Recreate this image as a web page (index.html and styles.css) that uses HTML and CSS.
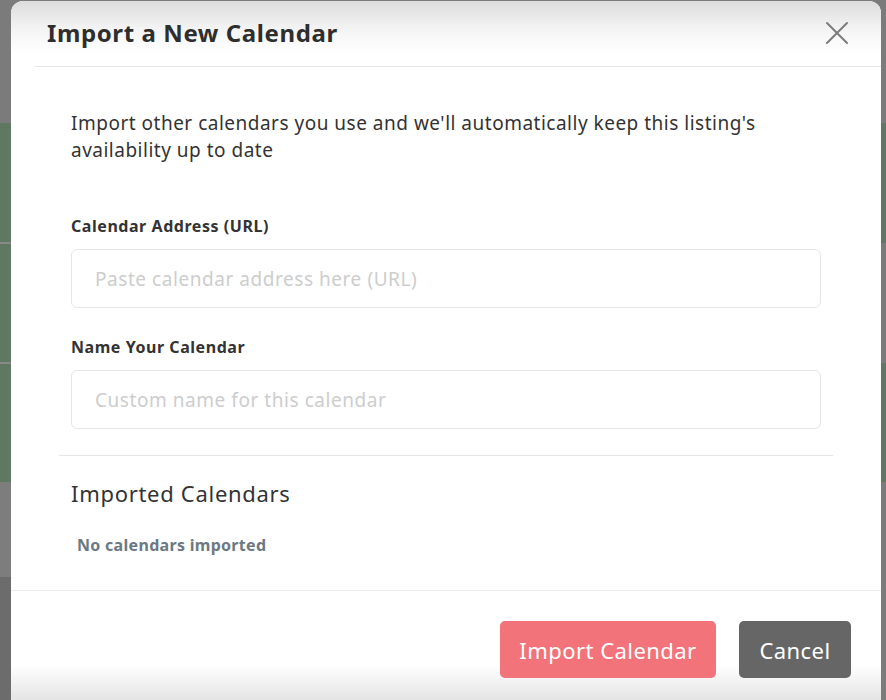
FILE: index.html
```html
<!DOCTYPE html>
<html lang="en">
<head>
<meta charset="utf-8">
<title>Import a New Calendar</title>
<link rel="stylesheet" href="styles.css">
</head>
<body>
<div class="modal">
  <div class="modal-header">
    <h2 class="modal-title">Import a New Calendar</h2>
    <button class="close-btn" aria-label="Close">
      <svg width="24" height="24" viewBox="0 0 24 24"><path d="M2 2 L22 22 M22 2 L2 22" stroke="#7c7c7c" stroke-width="2" fill="none" stroke-linecap="round"/></svg>
    </button>
  </div>
  <div class="modal-body">
    <p class="intro">Import other calendars you use and we'll automatically keep this listing's availability up to date</p>
    <label class="field-label">Calendar Address (URL)</label>
    <input class="field-input" type="text" placeholder="Paste calendar address here (URL)">
    <label class="field-label second">Name Your Calendar</label>
    <input class="field-input" type="text" placeholder="Custom name for this calendar">
    <hr class="divider">
    <h3 class="section-title">Imported Calendars</h3>
    <p class="empty">No calendars imported</p>
  </div>
  <div class="modal-footer">
    <button class="btn btn-primary">Import Calendar</button>
    <button class="btn btn-secondary">Cancel</button>
  </div>
</div>
</body>
</html>
```

FILE: styles.css
```css
html, body {
  margin: 0;
  padding: 0;
  height: 700px;
  overflow: hidden;
}
body {
  font-family: "Noto Sans", "Open Sans", sans-serif;
  color: #333;
  background:
    linear-gradient(to bottom,
      #7b7b7b 0, #7b7b7b 123px,
      #5f7861 123px, #5f7861 242px,
      #8a8a8a 242px, #8a8a8a 244px,
      #5f7861 244px, #5f7861 362px,
      #8a8a8a 362px, #8a8a8a 364px,
      #5f7861 364px, #5f7861 482px,
      #7d7d7d 482px, #7d7d7d 577px,
      #6c6c6c 577px, #6c6c6c 700px) left top / 11px 700px no-repeat,
    linear-gradient(to bottom,
      #7b7b7b 0, #7b7b7b 123px,
      #5f7861 123px, #5f7861 243px,
      #7b7b7b 243px, #7b7b7b 363px,
      #5f7861 363px, #5f7861 482px,
      #7b7b7b 482px, #7b7b7b 700px) right top / 5px 700px no-repeat,
    #7b7b7b;
}
.modal {
  margin: 1px 0 0 11px;
  width: 870px;
  height: 760px;
  background: #fff;
  border-radius: 12px 12px 0 0;
  display: flex;
  flex-direction: column;
  overflow: hidden;
}
.modal-header {
  height: 66px;
  box-sizing: border-box;
  background: linear-gradient(to bottom, #dcdcdc 0, #f4f4f4 28px, #fff 52px);
  display: flex;
  align-items: center;
  justify-content: space-between;
  padding: 0 32px 4px 36px;
  position: relative;
}
.modal-header::after {
  content: "";
  position: absolute;
  left: 24px;
  right: 0;
  bottom: 0;
  height: 1px;
  background: #e6e6e6;
}
.modal-title {
  margin: 0;
  font-size: 24px;
  font-weight: 700;
  color: #2e2e2e;
  letter-spacing: 0.6px;
}
.close-btn {
  border: 0;
  background: none;
  padding: 0;
  width: 24px;
  height: 24px;
  cursor: pointer;
  margin-top: 2px;
}
.modal-body {
  padding: 43px 48px 34px;
  border-bottom: 1px solid #ebebeb;
  display: flex;
  flex-direction: column;
}
.intro {
  margin: 0 12px;
  font-size: 19px;
  line-height: 27px;
  color: #333;
  letter-spacing: 0.5px;
}
.field-label {
  margin: 51px 12px 0;
  font-size: 16px;
  line-height: 22px;
  font-weight: 700;
  color: #333;
  letter-spacing: 0.55px;
}
.field-label.second {
  margin-top: 28px;
}
.field-input {
  margin: 12px 12px 0;
  height: 59px;
  box-sizing: border-box;
  border: 1px solid #e6e6e6;
  border-radius: 6px;
  padding: 0 23px;
  font-family: inherit;
  font-size: 19px;
  letter-spacing: 0.55px;
  color: #333;
  outline: none;
}
.field-input::placeholder {
  color: #cdcdcd;
}
.divider {
  margin: 26px 0 0;
  border: 0;
  border-top: 1px solid #e6e6e6;
  height: 0;
}
.section-title {
  margin: 22px 12px 0;
  font-size: 22px;
  line-height: 30px;
  font-weight: 400;
  color: #333;
  letter-spacing: 0.7px;
}
.empty {
  margin: 26px 18px 0;
  font-size: 16px;
  line-height: 22px;
  font-weight: 700;
  color: #6c7882;
  letter-spacing: 0.3px;
}
.modal-footer {
  flex: 1;
  padding: 30px 30px 0;
  display: flex;
  justify-content: flex-end;
  align-items: flex-start;
  gap: 23px;
  background: linear-gradient(to bottom, #fff 0, #fff 74px, #f0f0f0 94px, #e2e2e2 112px);
}
.btn {
  height: 57px;
  border: 0;
  border-radius: 5px;
  font-family: inherit;
  font-size: 22px;
  letter-spacing: 0.45px;
  color: #fff;
  cursor: pointer;
  padding: 0;
}
.btn-primary {
  width: 216px;
  background: #f2737a;
}
.btn-secondary {
  width: 112px;
  background: #666666;
}
```
